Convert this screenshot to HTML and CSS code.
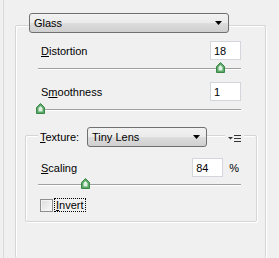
FILE: index.html
```html
<!DOCTYPE html>
<html lang="en">
<head>
    <meta charset="UTF-8">
    <title>Glass Filter</title>
    <link rel="stylesheet" href="styles.css">
</head>
<body>
    <div class="panel">
        <div class="select effect-select">
            <span>Glass</span>
            <svg class="arrow" width="7" height="4" viewBox="0 0 7 4"><path d="M0 0H7L3.5 4Z" fill="#000"/></svg>
        </div>

        <div class="group outer">
            <div class="row">
                <span class="label"><u>D</u>istortion</span>
                <div class="num">18</div>
            </div>
            <div class="slider">
                <div class="track"></div>
                <svg class="thumb" style="left: 178px;" width="9" height="11" viewBox="0 0 9 11"><path d="M4.5 0.5L8.5 4.5V10.5H0.5V4.5Z" fill="#5aa868" stroke="#3a8747"/><path d="M4.5 3L6.5 5V8.5H2.5V5Z" fill="#dff0e2"/></svg>
            </div>

            <div class="row row-gap">
                <span class="label">S<u>m</u>oothness</span>
                <div class="num">1</div>
            </div>
            <div class="slider">
                <div class="track"></div>
                <svg class="thumb" style="left: -2px;" width="9" height="11" viewBox="0 0 9 11"><path d="M4.5 0.5L8.5 4.5V10.5H0.5V4.5Z" fill="#5aa868" stroke="#3a8747"/><path d="M4.5 3L6.5 5V8.5H2.5V5Z" fill="#dff0e2"/></svg>
            </div>

            <div class="texture-row">
                <span class="label texture-label"><u>T</u>exture:</span>
                <div class="select texture-select">
                    <span>Tiny Lens</span>
                    <svg class="arrow" width="7" height="4" viewBox="0 0 7 4"><path d="M0 0H7L3.5 4Z" fill="#000"/></svg>
                </div>
                <div class="menu-icon">
                    <svg width="13" height="7" viewBox="0 0 13 7"><path d="M0 2H5L2.5 4.5Z" fill="#333"/><path d="M6 0.5H13M6 3.5H13M6 6.5H13" stroke="#333"/></svg>
                </div>
            </div>

            <div class="group inner">
                <div class="row">
                    <span class="label"><u>S</u>caling</span>
                    <div class="num">84</div>
                    <span class="unit">%</span>
                </div>
                <div class="slider">
                    <div class="track"></div>
                    <svg class="thumb" style="left: 43px;" width="9" height="11" viewBox="0 0 9 11"><path d="M4.5 0.5L8.5 4.5V10.5H0.5V4.5Z" fill="#5aa868" stroke="#3a8747"/><path d="M4.5 3L6.5 5V8.5H2.5V5Z" fill="#dff0e2"/></svg>
                </div>
                <div class="check-row">
                    <span class="checkbox"></span>
                    <span class="focus"><u>I</u>nvert</span>
                </div>
            </div>
        </div>
    </div>
</body>
</html>
```

FILE: styles.css
```css
body {
    margin: 0;
    background-color: #f0f0f0;
    font-family: "Liberation Sans", Arial, sans-serif;
    font-size: 11px;
    color: #000;
    overflow: hidden;
}

.panel {
    margin-left: 3px;
    height: 258px;
    padding-top: 13px;
    border-left: 1px solid #dadada;
    box-sizing: border-box;
    overflow: hidden;
}

u {
    text-decoration: underline;
}

/* combo boxes */
.select {
    position: relative;
    z-index: 1;
    display: flex;
    align-items: center;
    justify-content: space-between;
    height: 20px;
    padding: 0 6px 0 4px;
    border: 1px solid #707070;
    border-radius: 3px;
    background: linear-gradient(#f2f2f2, #ebebeb 50%, #dddddd 51%, #cfcfcf);
    box-sizing: border-box;
}

.effect-select {
    width: 200px;
    margin-left: 25px;
}

.texture-select {
    width: 120px;
}

/* group boxes */
.group {
    border: 1px solid #d5d5d5;
    border-radius: 2px;
    box-shadow: inset 1px 1px 0 #fff, 1px 1px 0 #fff;
    box-sizing: border-box;
}

.outer {
    width: 251px;
    height: 233px;
    margin: -8px 0 0 11px;
    padding: 15px 24px 0 25px;
    border-bottom: none;
}

.inner {
    width: 232px;
    height: 87px;
    margin: -12px 0 0 -16px;
    padding: 22px 15px 0 15px;
}

/* rows */
.row {
    display: flex;
    align-items: center;
    height: 19px;
}

.row-gap {
    margin-top: 8px;
}

.num {
    width: 31px;
    height: 19px;
    margin-left: auto;
    padding: 3px 0 0 3px;
    border: 1px solid #d3d6db;
    background-color: #fff;
    box-sizing: border-box;
}

.unit {
    margin-left: 6px;
    margin-right: 2px;
}

/* trackbars */
.slider {
    position: relative;
    width: 203px;
    height: 12px;
    margin: 2px 0 0 -3px;
    padding-top: 6px;
    box-sizing: border-box;
}

.inner .slider {
    margin-top: 1px;
}

.track {
    height: 1px;
    background-color: #a0a0a0;
    border-bottom: 1px solid #fff;
}

.thumb {
    position: absolute;
    top: 0;
}

/* texture line */
.texture-row {
    position: relative;
    z-index: 1;
    display: flex;
    align-items: center;
    height: 20px;
    margin: 12px -3px 0 -3px;
}

.texture-label {
    width: 49px;
    padding-left: 2px;
    background-color: #f0f0f0;
    box-sizing: border-box;
}

.menu-icon {
    display: flex;
    margin-left: auto;
    padding: 2px 3px 0 3px;
    background-color: #f0f0f0;
}

/* checkbox */
.check-row {
    display: flex;
    align-items: center;
    height: 14px;
    margin: 8px 0 0 -1px;
}

.checkbox {
    width: 13px;
    height: 13px;
    border: 1px solid #8e8f8f;
    background: linear-gradient(135deg, #dcdcdc, #fafafa);
    box-shadow: inset 0 0 0 1px #f4f4f4;
    box-sizing: border-box;
}

.focus {
    margin-left: 2px;
    padding: 0 1px;
    line-height: 12px;
    outline: 1px dotted #000;
}
```
